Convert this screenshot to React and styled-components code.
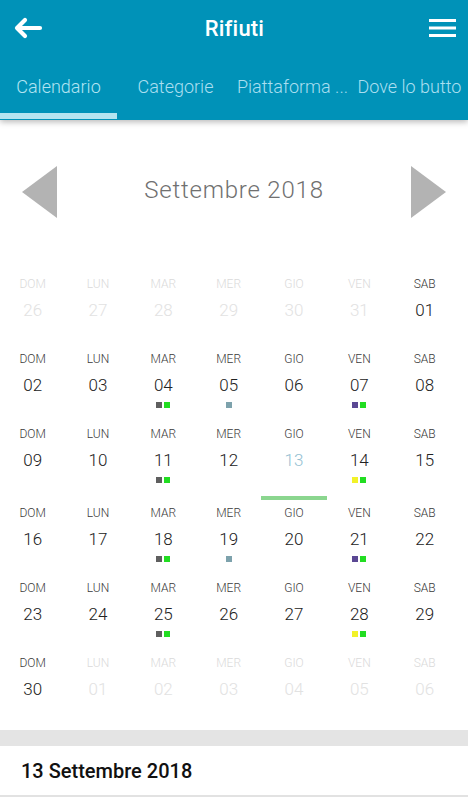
import React from 'react';
import styled, { createGlobalStyle } from 'styled-components';

const GlobalStyle = createGlobalStyle`
  html, body {
    margin: 0;
    padding: 0;
    background: #fff;
    font-family: Roboto, 'Noto Sans', sans-serif;
  }
`;

const LIGHT = "'Roboto Light', Roboto, sans-serif";
const MEDIUM = "'Roboto Medium', Roboto, sans-serif";

const Page = styled.div`
  width: 468px;
  min-height: 800px;
  background: #fff;
  overflow: hidden;
`;

const Header = styled.header`
  position: relative;
  z-index: 2;
  background: #0092b8;
  box-shadow: 0 2px 6px rgba(0, 0, 0, 0.28);
`;

const TitleBar = styled.div`
  height: 56px;
  display: flex;
  align-items: center;
  justify-content: space-between;
  padding: 0 12px 0 13px;
`;

const Title = styled.h1`
  margin: 0;
  font-family: ${MEDIUM};
  font-size: 22px;
  font-weight: 400;
  color: #fff;
  letter-spacing: 0.2px;
`;

const IconButton = styled.div`
  width: 30px;
  height: 30px;
  display: flex;
  align-items: center;
  justify-content: ${p => (p.right ? 'flex-end' : 'flex-start')};
`;

const Tabs = styled.nav`
  display: grid;
  grid-template-columns: repeat(4, 117px);
  height: 64px;
`;

const Tab = styled.div`
  display: flex;
  flex-direction: column;
  justify-content: space-between;
  overflow: hidden;
`;

const TabLabel = styled.span`
  padding-top: 20px;
  font-family: ${LIGHT};
  font-size: 18px;
  color: ${p => (p.active ? '#b2e4f2' : '#aadff0')};
  text-align: center;
  white-space: nowrap;
`;

const Indicator = styled.div`
  height: 6px;
  margin-bottom: 1px;
  background: ${p => (p.active ? '#b4e4f0' : 'transparent')};
`;

const Calendar = styled.section`
  padding-top: 46px;
`;

const MonthBar = styled.div`
  display: flex;
  align-items: center;
  justify-content: space-between;
  height: 52px;
  padding: 0 22px;
`;

const MonthName = styled.div`
  font-family: ${LIGHT};
  font-size: 24px;
  color: #707070;
  letter-spacing: 0.8px;
  margin-top: -4px;
`;

const Grid = styled.div`
  display: grid;
  grid-template-columns: repeat(7, 65.33px);
  margin-top: 58px;
`;

const Cell = styled.div`
  min-height: 75px;
  display: flex;
  flex-direction: column;
  align-items: center;
`;

const DayName = styled.div`
  font-family: ${LIGHT};
  font-size: 12px;
  line-height: 16px;
  color: ${p => (p.muted ? '#dadada' : '#3a3a3a')};
`;

const DayNum = styled.div`
  margin-top: 7px;
  font-family: ${LIGHT};
  font-size: 17px;
  line-height: 22px;
  color: ${p => (p.today ? '#94bfd3' : p.muted ? '#e2e2e2' : '#222')};
`;

const Dots = styled.div`
  display: flex;
  gap: 2px;
  margin-top: 6px;
  height: 6px;
`;

const Dot = styled.span`
  width: 6px;
  height: 6px;
  background: ${p => p.color};
`;

const TodayBar = styled.div`
  align-self: stretch;
  height: 4px;
  margin: 13px 0 5px;
  background: #8bd68f;
`;

const Band = styled.div`
  height: 16px;
  background: #e4e4e4;
`;

const SelectedDate = styled.div`
  padding: 13px 21px 12px;
  font-family: ${MEDIUM};
  font-size: 20px;
  color: #111;
  border-bottom: 2px solid #e2e2e2;
`;

const C = {
  gray: '#5f5f5f',
  green: '#22dd22',
  slate: '#7da2ac',
  purple: '#5b4894',
  yellow: '#f2f229'
};

const NAMES = ['DOM', 'LUN', 'MAR', 'MER', 'GIO', 'VEN', 'SAB'];

const weeks = [
  ['26', '27', '28', '29', '30', '31', '01'],
  ['02', '03', '04', '05', '06', '07', '08'],
  ['09', '10', '11', '12', '13', '14', '15'],
  ['16', '17', '18', '19', '20', '21', '22'],
  ['23', '24', '25', '26', '27', '28', '29'],
  ['30', '01', '02', '03', '04', '05', '06']
];

const pickups = {
  '04': [C.gray, C.green],
  '05': [C.slate],
  '07': [C.purple, C.green],
  '11': [C.gray, C.green],
  '14': [C.yellow, C.green],
  '18': [C.gray, C.green],
  '19': [C.slate],
  '21': [C.purple, C.green],
  '25': [C.gray, C.green],
  '28': [C.yellow, C.green]
};

function Arrow({ dir }) {
  return (
    <svg width="35" height="52" viewBox="0 0 35 52">
      <polygon
        points={dir === 'left' ? '35,0 35,52 0,26' : '0,0 0,52 35,26'}
        fill="#b3b3b3"
      />
    </svg>
  );
}

export default function App() {
  return (
    <Page>
      <GlobalStyle />
      <Header>
        <TitleBar>
          <IconButton>
            <svg width="30" height="22" viewBox="0 0 30 22">
              <path
                d="M27 11H4M12 3L4 11l8 8"
                stroke="#fff"
                strokeWidth="4.2"
                strokeLinecap="round"
                strokeLinejoin="round"
                fill="none"
              />
            </svg>
          </IconButton>
          <Title>Rifiuti</Title>
          <IconButton right>
            <svg width="27" height="20" viewBox="0 0 27 20">
              <rect x="0" y="1" width="27" height="3" fill="#fff" />
              <rect x="0" y="8.5" width="27" height="3" fill="#fff" />
              <rect x="0" y="16" width="27" height="3" fill="#fff" />
            </svg>
          </IconButton>
        </TitleBar>
        <Tabs>
          {['Calendario', 'Categorie', 'Piattaforma ...', 'Dove lo butto'].map((t, i) => (
            <Tab key={t}>
              <TabLabel active={i === 0}>{t}</TabLabel>
              <Indicator active={i === 0} />
            </Tab>
          ))}
        </Tabs>
      </Header>

      <Calendar>
        <MonthBar>
          <Arrow dir="left" />
          <MonthName>Settembre 2018</MonthName>
          <Arrow dir="right" />
        </MonthBar>
        <Grid>
          {weeks.map((week, w) =>
            week.map((d, i) => {
              const muted = (w === 0 && i < 6) || (w === 5 && i > 0);
              const today = w === 2 && d === '13';
              const dots = !muted && pickups[d];
              return (
                <Cell key={w + '-' + i}>
                  <DayName muted={muted}>{NAMES[i]}</DayName>
                  <DayNum muted={muted} today={today}>{d}</DayNum>
                  {dots && (
                    <Dots>
                      {dots.map((c, k) => (
                        <Dot key={k} color={c} />
                      ))}
                    </Dots>
                  )}
                  {today && (
                    <>
                      <Dots />
                      <TodayBar />
                    </>
                  )}
                </Cell>
              );
            })
          )}
        </Grid>
      </Calendar>
      <Band />
      <SelectedDate>13 Settembre 2018</SelectedDate>
    </Page>
  );
}
